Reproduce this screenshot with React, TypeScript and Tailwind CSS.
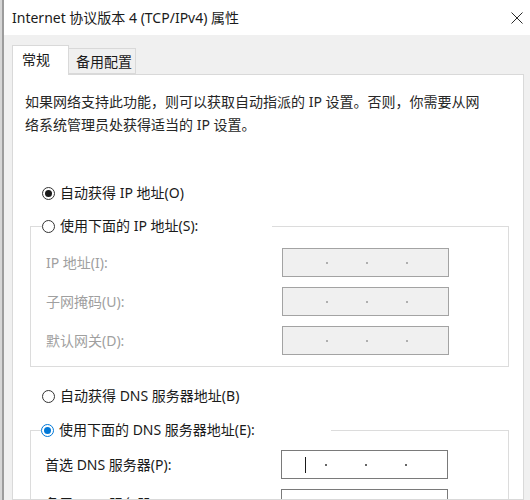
import type { ReactNode } from "react";

const FONT = "font-['Noto_Sans','Noto_Sans_CJK_SC',sans-serif]";

type RadioProps = {
  label: string;
  checked?: boolean;
  accent?: boolean;
};

function Radio({ label, checked = false, accent = false }: RadioProps) {
  const ring = accent ? "border-[#0078d7]" : "border-[#333333]";
  const dot = accent ? "bg-[#0078d7]" : "bg-[#1a1a1a]";
  return (
    <span className="flex h-[20px] items-center gap-[5px] bg-white pr-[4px]">
      <span className={`flex h-[13px] w-[13px] shrink-0 items-center justify-center rounded-full border bg-white ${ring}`}>
        {checked ? <span className={`h-[7px] w-[7px] rounded-full ${dot}`} /> : null}
      </span>
      <span className="text-[14px] leading-[20px] text-[#1a1a1a]">{label}</span>
    </span>
  );
}

function IpBox({ disabled = false, caret = false }: { disabled?: boolean; caret?: boolean }) {
  const box = disabled ? "bg-[#f0f0f0] border-[#a3a3a3]" : "bg-white border-[#7a7a7a]";
  const dot = disabled ? "bg-[#9a9a9a]" : "bg-[#333333]";
  return (
    <div className={`relative flex h-[29px] w-[167px] shrink-0 items-center border pl-[43px] ${box}`}>
      {caret ? <span className="absolute left-[23px] top-[6px] h-[16px] w-px bg-[#1a1a1a]" /> : null}
      <div className="flex items-center gap-[38px] pt-[1px]">
        <span className={`h-[2px] w-[2px] rounded-full ${dot}`} />
        <span className={`h-[2px] w-[2px] rounded-full ${dot}`} />
        <span className={`h-[2px] w-[2px] rounded-full ${dot}`} />
      </div>
    </div>
  );
}

function FieldRow({ label, children, disabled = false }: { label: string; children: ReactNode; disabled?: boolean }) {
  return (
    <div className="flex items-center">
      <span className={`w-[236px] shrink-0 text-[14px] ${disabled ? "text-[#a0a0a0]" : "text-[#1a1a1a]"}`}>{label}</span>
      {children}
    </div>
  );
}

export default function App() {
  return (
    <div className={`flex h-[500px] w-[530px] overflow-hidden bg-[#f0f0f0] ${FONT}`}>
      <div className="w-[2px] shrink-0 bg-[#d6d6d6]" />
      <div className="w-[2px] shrink-0 bg-[#9c9c9c]" />
      <div className="flex w-[526px] shrink-0 flex-col">
        <div className="flex h-[35px] w-full shrink-0 items-center justify-between bg-white pl-[8px] pr-[7px]">
          <span className="text-[14px] text-[#1a1a1a]">Internet 协议版本 4 (TCP/IPv4) 属性</span>
          {/* close glyph */}
          <svg width="12" height="12" viewBox="0 0 12 12" fill="none" className="shrink-0">
            <path d="M0.5 0.5L11.5 11.5M11.5 0.5L0.5 11.5" stroke="#2b2b2b" strokeWidth="1" />
          </svg>
        </div>

        <div className="flex min-h-0 flex-1 flex-col pl-[8px] pr-[6px] pt-[10px]">
          <div className="relative z-10 flex shrink-0 items-end">
            <div className="-mb-px flex h-[30px] w-[57px] items-center border border-b-0 border-[#d9d9d9] bg-white pb-[2px] pl-[9px]">
              <span className="text-[14px] text-[#1a1a1a]">常规</span>
            </div>
            <div className="flex h-[26px] w-[67px] items-center border border-l-0 border-[#d9d9d9] bg-[#f0f0f0] pl-[7px]">
              <span className="text-[14px] text-[#1a1a1a]">备用配置</span>
            </div>
          </div>

          <div className="min-h-0 flex-1 overflow-hidden border border-[#d9d9d9] bg-white">
            <p className="pl-[12px] pr-[20px] pt-[15px] text-[14px] leading-[23px] text-[#262626]">
              如果网络支持此功能，则可以获取自动指派的 IP 设置。否则，你需要从网
              <br />
              络系统管理员处获得适当的 IP 设置。
            </p>

            <div className="mt-[47px] pl-[29px]">
              <Radio label="自动获得 IP 地址(O)" checked />
            </div>

            <fieldset className="ml-[17px] mr-[14px] mt-[13px] border border-[#dcdcdc] pb-[11px] pl-[15px] pt-[12px]">
              <legend className="-ml-[4px] w-[230px]">
                <Radio label="使用下面的 IP 地址(S):" />
              </legend>
              <div className="flex flex-col gap-[10px]">
                <FieldRow label="IP 地址(I):" disabled>
                  <IpBox disabled />
                </FieldRow>
                <FieldRow label="子网掩码(U):" disabled>
                  <IpBox disabled />
                </FieldRow>
                <FieldRow label="默认网关(D):" disabled>
                  <IpBox disabled />
                </FieldRow>
              </div>
            </fieldset>

            <div className="mt-[19px] pl-[29px]">
              <Radio label="自动获得 DNS 服务器地址(B)" />
            </div>

            <fieldset className="ml-[17px] mr-[14px] mt-[14px] border border-[#dcdcdc] pb-[11px] pl-[14px] pt-[10px]">
              <legend className="-ml-[4px] w-[290px]">
                <Radio label="使用下面的 DNS 服务器地址(E):" checked accent />
              </legend>
              <div className="flex flex-col gap-[10px]">
                <FieldRow label="首选 DNS 服务器(P):">
                  <IpBox caret />
                </FieldRow>
                <FieldRow label="备用 DNS 服务器(A):">
                  <IpBox />
                </FieldRow>
              </div>
            </fieldset>
          </div>
        </div>
      </div>
    </div>
  );
}
